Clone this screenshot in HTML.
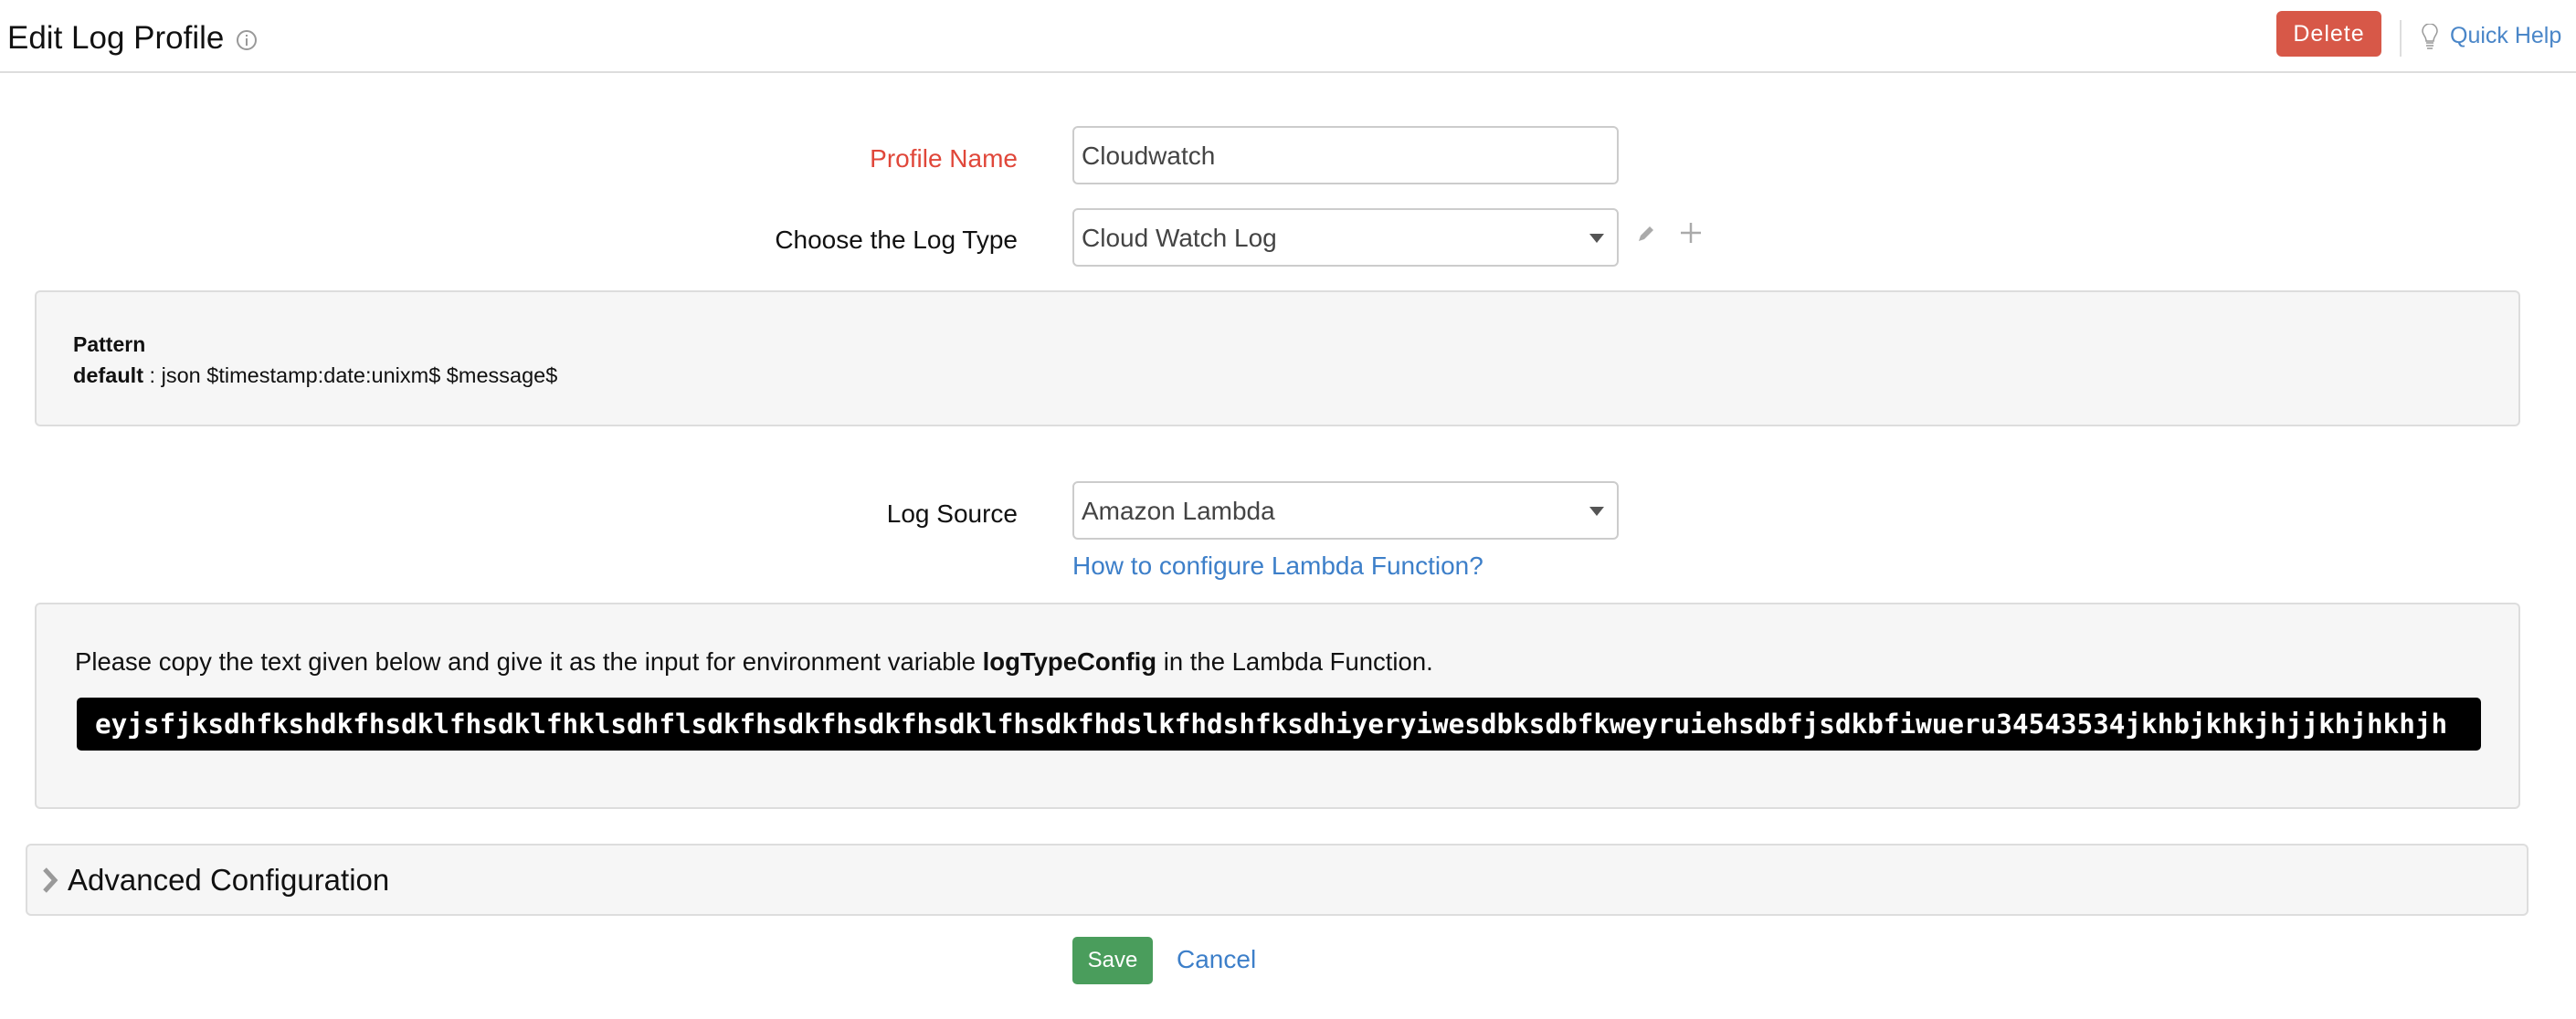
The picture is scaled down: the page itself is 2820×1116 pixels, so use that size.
<!DOCTYPE html>
<html><head><meta charset="utf-8"><style>
*{box-sizing:border-box;margin:0;padding:0}
body{width:2820px;height:1116px;background:#fff;font-family:"Liberation Sans",sans-serif;color:#111;position:relative;overflow:hidden}
.a{position:absolute}
.lbl{position:absolute;right:1706px;font-size:28px;line-height:34px;white-space:nowrap}
.box{position:absolute;left:1174px;width:598px;height:64px;border:2px solid #ccc;border-radius:6px;background:#fff;font-size:28px;color:#444;padding-left:8px;line-height:62px}
.arrow{position:absolute;right:14px;top:26px;width:0;height:0;border-left:8px solid transparent;border-right:8px solid transparent;border-top:10px solid #555}
.panel{position:absolute;background:#f6f6f6;border:2px solid #ddd;border-radius:6px}
</style></head><body>
<div class="a" style="left:8px;top:21px;font-size:35px;line-height:42px;color:#111">Edit Log Profile</div>
<svg class="a" style="left:258px;top:32px" width="24" height="24" viewBox="0 0 24 24"><circle cx="12" cy="12" r="10" fill="none" stroke="#999" stroke-width="2"/><rect x="11" y="10" width="2" height="8" fill="#999"/><rect x="11" y="6" width="2" height="2" fill="#999"/></svg>
<div class="a" style="left:0;top:78px;width:2820px;height:2px;background:#ddd"></div>
<div class="a" style="left:2492px;top:12px;width:115px;height:50px;background:#d75848;border-radius:6px;color:#fff;font-size:25px;line-height:50px;text-align:center;letter-spacing:1px">Delete</div>
<div class="a" style="left:2627px;top:22px;width:2px;height:40px;background:#ddd"></div>
<svg class="a" style="left:2650px;top:26px" width="20" height="30" viewBox="0 0 20 30"><path d="M6 19 C6 14 2 12 2 8 A8 8 0 0 1 18 8 C18 12 14 14 14 19 Z" fill="none" stroke="#999" stroke-width="1.5"/><path d="M6 21h8M6 24h8M7 27h6" stroke="#999" stroke-width="1.5"/></svg>
<div class="a" style="left:2682px;top:21px;font-size:25px;line-height:36px;color:#4a86c8">Quick Help</div>

<div class="lbl" style="top:157px;color:#e0473a">Profile Name</div>
<div class="box" style="top:138px">Cloudwatch</div>
<div class="lbl" style="top:246px">Choose the Log Type</div>
<div class="box" style="top:228px">Cloud Watch Log<div class="arrow"></div></div>
<svg class="a" style="left:1790px;top:244px" width="24" height="24" viewBox="0 0 24 24"><path d="M4 20 L6 14 L16 4 L20 8 L10 18 Z" fill="#aaa"/></svg>
<svg class="a" style="left:1838px;top:242px" width="26" height="26" viewBox="0 0 26 26"><path d="M13 2v22M2 13h22" stroke="#aaa" stroke-width="2.5"/></svg>

<div class="panel" style="left:38px;top:318px;width:2721px;height:149px">
<div class="a" style="left:40px;top:44px;font-size:23px;font-weight:bold">Pattern</div>
<div class="a" style="left:40px;top:78px;font-size:23.5px"><b>default</b> : json $timestamp:date:unixm$ $message$</div>
</div>

<div class="lbl" style="top:546px">Log Source</div>
<div class="box" style="top:527px">Amazon Lambda<div class="arrow"></div></div>
<div class="a" style="left:1174px;top:603px;font-size:28px;line-height:34px;color:#3d7fc9">How to configure Lambda Function?</div>

<div class="panel" style="left:38px;top:660px;width:2721px;height:226px">
<div class="a" style="left:42px;top:46px;font-size:27.5px;line-height:34px">Please copy the text given below and give it as the input for environment variable <b>logTypeConfig</b> in the Lambda Function.</div>
<div class="a" style="left:44px;top:102px;width:2632px;height:58px;background:#000;border-radius:5px;color:#fff;font-family:'DejaVu Sans Mono','Liberation Mono',monospace;font-weight:bold;font-size:29.3px;line-height:58px;padding-left:20px;white-space:nowrap;overflow:hidden">eyjsfjksdhfkshdkfhsdklfhsdklfhklsdhflsdkfhsdkfhsdkfhsdklfhsdkfhdslkfhdshfksdhiyeryiwesdbksdbfkweyruiehsdbfjsdkbfiwueru34543534jkhbjkhkjhjjkhjhkhjh</div>
</div>

<div class="panel" style="left:28px;top:924px;width:2740px;height:79px">
<svg class="a" style="left:16px;top:24px" width="18" height="28" viewBox="0 0 18 28"><path d="M3 2 L14 14 L3 26" fill="none" stroke="#999" stroke-width="5"/></svg>
<div class="a" style="left:44px;top:18px;font-size:33px;line-height:40px">Advanced Configuration</div>
</div>

<div class="a" style="left:1174px;top:1026px;width:88px;height:52px;background:#4a9d5c;border-radius:5px;color:#fff;font-size:24px;line-height:52px;text-align:center">Save</div>
<div class="a" style="left:1288px;top:1033px;font-size:28px;line-height:36px;color:#3d7fc9">Cancel</div>
</body></html>
